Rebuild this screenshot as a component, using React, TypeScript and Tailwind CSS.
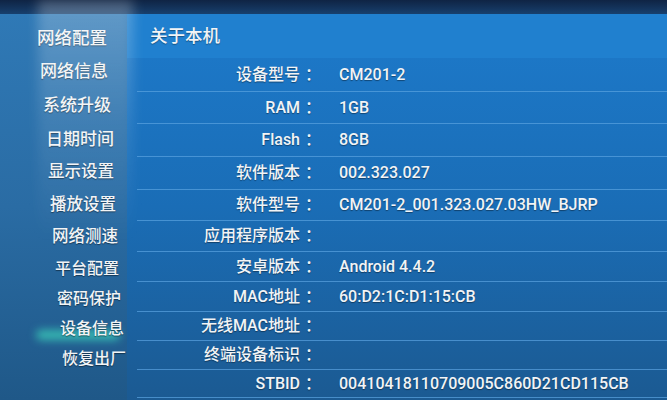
import React from "react";

const menu = [
  { name: "网络配置", pl: "pl-[37px]", h: "h-[34px]", size: "text-[17.5px]" },
  { name: "网络信息", pl: "pl-[40px]", h: "h-[34px]", size: "text-[17px]" },
  { name: "系统升级", pl: "pl-[43px]", h: "h-[34px]", size: "text-[17px]" },
  { name: "日期时间", pl: "pl-[46px]", h: "h-[33px]", size: "text-[17px]" },
  { name: "显示设置", pl: "pl-[48px]", h: "h-[33px]", size: "text-[16.5px]" },
  { name: "播放设置", pl: "pl-[50px]", h: "h-[33px]", size: "text-[16.5px]" },
  { name: "网络测速", pl: "pl-[52px]", h: "h-[31px]", size: "text-[16.5px]" },
  { name: "平台配置", pl: "pl-[55px]", h: "h-[31px]", size: "text-[16px]" },
  { name: "密码保护", pl: "pl-[57px]", h: "h-[30px]", size: "text-[16px]" },
  { name: "设备信息", pl: "pl-[60px]", h: "h-[30px]", size: "text-[16px]", active: true },
  { name: "恢复出厂", pl: "pl-[62px]", h: "h-[30px]", size: "text-[16px]" },
];

const rows = [
  { label: "设备型号", value: "CM201-2", h: "h-[34px]" },
  { label: "RAM", value: "1GB", h: "h-[32px]" },
  { label: "Flash", value: "8GB", h: "h-[33px]" },
  { label: "软件版本", value: "002.323.027", h: "h-[33px]" },
  { label: "软件型号", value: "CM201-2_001.323.027.03HW_BJRP", h: "h-[31px]" },
  { label: "应用程序版本", value: "", h: "h-[31px]" },
  { label: "安卓版本", value: "Android 4.4.2", h: "h-[30px]" },
  { label: "MAC地址", value: "60:D2:1C:D1:15:CB", h: "h-[30px]" },
  { label: "无线MAC地址", value: "", h: "h-[29px]" },
  { label: "终端设备标识", value: "", h: "h-[29px]" },
  { label: "STBID", value: "00410418110709005C860D21CD115CB", h: "h-[28px]" },
];

export default function App() {
  return (
    <div
      className="relative w-[667px] h-[400px] overflow-hidden bg-[#1b6cb2] text-[#f2f4f6] font-medium"
      style={{ fontFamily: 'Roboto, "Noto Sans CJK SC", sans-serif' }}
    >
      {/* dark bezel strip at top */}
      <div className="h-[14px] bg-gradient-to-b from-[#0f2444] to-[#17406e]" />

      <div className="flex h-[386px]">
        {/* Sidebar */}
        <div className="relative w-[127px] shrink-0 bg-gradient-to-b from-[#2f79b6] via-[#2a6ca4] to-[#1f5888] pt-[7px]">
          {menu.map((m) => (
            <div
              key={m.name}
              className={`relative flex items-center ${m.h} ${m.pl} ${m.size} [text-shadow:0_1px_1px_rgba(0,0,0,0.45)]`}
            >
              {m.active && (
                <div className="absolute left-[36px] top-[16px] w-[84px] h-[10px] rounded-full bg-[#3fe0c0]/70 blur-[4px]" />
              )}
              <span className="relative whitespace-nowrap">{m.name}</span>
            </div>
          ))}
        </div>

        {/* Content */}
        <div className="flex-1 flex flex-col bg-gradient-to-b from-[#1d7acb] via-[#1a6db6] to-[#1b5a92]">
          <div className="h-[44px] flex items-center pl-[23px] text-[17.5px] bg-[#2080cf] [text-shadow:0_1px_1px_rgba(0,0,0,0.35)]">
            关于本机
          </div>
          {rows.map((r) => (
            <div
              key={r.label}
              className={`flex items-center ${r.h} ml-[10px] border-b border-[#5aa3e0]/70 text-[16px] [text-shadow:0_1px_1px_rgba(0,0,0,0.4)]`}
            >
              <div className="w-[163px] text-right whitespace-nowrap">{r.label}</div>
              <div className="w-[39px] pl-[5px]">：</div>
              <div className="whitespace-nowrap">{r.value}</div>
            </div>
          ))}
        </div>
      </div>

      {/* screen glare over the sidebar */}
      <div className="pointer-events-none absolute left-[38px] top-0 w-[95px] h-[240px] bg-gradient-to-b from-white/25 via-white/10 to-transparent blur-[6px]" />
    </div>
  );
}
